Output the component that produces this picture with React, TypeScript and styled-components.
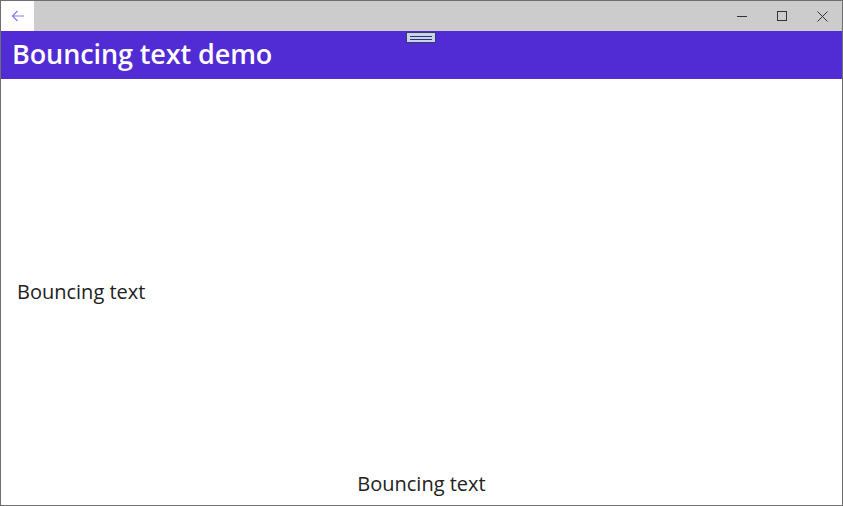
import React from "react";
import styled, { createGlobalStyle } from "styled-components";

const Global = createGlobalStyle`
  html, body { margin: 0; padding: 0; background: #ffffff; }
  * { box-sizing: border-box; }
`;

const Window = styled.div`
  width: 843px;
  height: 506px;
  border: 1px solid #6f6f6f;
  display: flex;
  flex-direction: column;
  background: #ffffff;
  font-family: "Open Sans", "Noto Sans", sans-serif;
  overflow: hidden;
`;

const TitleBar = styled.div`
  height: 30px;
  background: #cccccc;
  display: flex;
  align-items: stretch;
  flex-shrink: 0;
`;

const BackButton = styled.div`
  width: 33px;
  background: #ffffff;
  display: flex;
  align-items: center;
  justify-content: center;
`;

const Spacer = styled.div`
  flex: 1;
`;

const CaptionButton = styled.div<{ $w: number }>`
  width: ${(p) => p.$w}px;
  display: flex;
  align-items: center;
  justify-content: center;
`;

const Header = styled.div`
  position: relative;
  height: 48px;
  background: #512bd4;
  display: flex;
  align-items: center;
  padding-left: 11px;
  flex-shrink: 0;
`;

const Title = styled.h1`
  margin: 0;
  color: #ffffff;
  font-family: "Open Sans", "Noto Sans", sans-serif;
  font-weight: 600;
  font-size: 27px;
  line-height: 1;
  padding-bottom: 4px;
  letter-spacing: -0.1px;
`;

const Grip = styled.div`
  position: absolute;
  left: 405px;
  top: 1px;
  width: 30px;
  height: 11px;
  background: #c8d3f0;
  border: 1px solid #3b3b66;
  display: flex;
  flex-direction: column;
  justify-content: center;
  align-items: center;
  gap: 2px;
`;

const GripLine = styled.div`
  width: 22px;
  height: 1px;
  background: #2f3560;
`;

const Content = styled.div`
  flex: 1;
  display: grid;
  grid-template: 1fr / 1fr;
  padding: 8px 16px 9px 16px;
`;

const BounceText = styled.div<{ $pos: "left" | "bottom" }>`
  grid-area: 1 / 1;
  font-family: "Open Sans", "Noto Sans", sans-serif;
  font-size: 20px;
  color: #222222;
  line-height: 24px;
  align-self: ${(p) => (p.$pos === "left" ? "center" : "end")};
  justify-self: ${(p) => (p.$pos === "left" ? "start" : "center")};
`;

export default function App() {
  return (
    <>
      <Global />
      <Window>
        <TitleBar>
          <BackButton>
            <svg width="16" height="16" viewBox="0 0 16 16" fill="none" stroke="#8b76e6" strokeWidth="1.2">
              <path d="M14 8H2.5M7.5 3L2.5 8l5 5" />
            </svg>
          </BackButton>
          <Spacer />
          <CaptionButton $w={40}>
            <svg width="10" height="10" viewBox="0 0 10 10" stroke="#333" strokeWidth="1">
              <path d="M0 5.5h10" />
            </svg>
          </CaptionButton>
          <CaptionButton $w={40}>
            <svg width="10" height="10" viewBox="0 0 10 10" fill="none" stroke="#333" strokeWidth="1">
              <rect x="0.5" y="0.5" width="9" height="9" />
            </svg>
          </CaptionButton>
          <CaptionButton $w={40}>
            <svg width="11" height="11" viewBox="0 0 11 11" stroke="#333" strokeWidth="1">
              <path d="M0.5 0.5l10 10M10.5 0.5l-10 10" />
            </svg>
          </CaptionButton>
        </TitleBar>
        <Header>
          <Title>Bouncing text demo</Title>
          <Grip>
            <GripLine />
            <GripLine />
          </Grip>
        </Header>
        <Content>
          <BounceText $pos="left">Bouncing text</BounceText>
          <BounceText $pos="bottom">Bouncing text</BounceText>
        </Content>
      </Window>
    </>
  );
}
